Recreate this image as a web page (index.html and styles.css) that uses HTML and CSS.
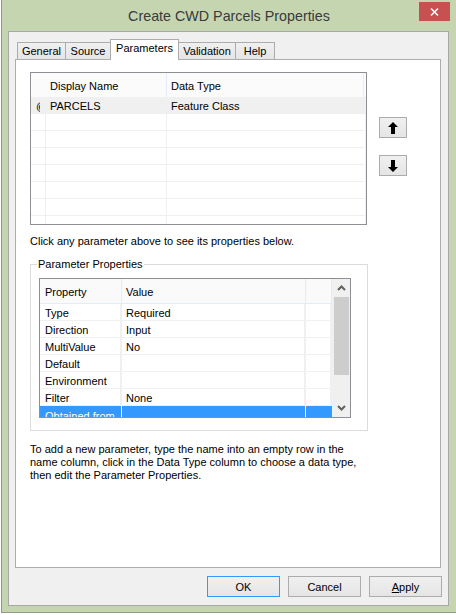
FILE: index.html
```html
<!DOCTYPE html>
<html>
<head>
<meta charset="utf-8">
<title>Create CWD Parcels Properties</title>
<link rel="stylesheet" href="styles.css">
</head>
<body>
<div class="window">
  <div class="titlebar">
    <div class="title">Create CWD Parcels Properties</div>
    <div class="close">
      <svg width="9" height="8" viewBox="0 0 9 8"><path d="M1 0.5 L8 7.5 M8 0.5 L1 7.5" stroke="#fff" stroke-width="1.5" fill="none"/></svg>
    </div>
  </div>
  <div class="client">
    <div class="tabs">
      <div class="tab w-general">General</div>
      <div class="tab w-source">Source</div>
      <div class="tab active w-params">Parameters</div>
      <div class="tab w-valid">Validation</div>
      <div class="tab w-help">Help</div>
    </div>
    <div class="panel">
      <div class="toprow">
        <div class="grid1">
          <div class="g1row g1head">
            <div class="c0"></div>
            <div class="c1">Display Name</div>
            <div class="c2">Data Type</div>
            <div class="c3"></div>
          </div>
          <div class="g1row sel">
            <div class="c0"><span class="clip">@</span></div>
            <div class="c1">PARCELS</div>
            <div class="c2">Feature Class</div>
          </div>
          <div class="g1row"><div class="c0"></div><div class="c1"></div><div class="c2"></div></div>
          <div class="g1row"><div class="c0"></div><div class="c1"></div><div class="c2"></div></div>
          <div class="g1row"><div class="c0"></div><div class="c1"></div><div class="c2"></div></div>
          <div class="g1row"><div class="c0"></div><div class="c1"></div><div class="c2"></div></div>
          <div class="g1row"><div class="c0"></div><div class="c1"></div><div class="c2"></div></div>
          <div class="g1row"><div class="c0"></div><div class="c1"></div><div class="c2"></div></div>
          <div class="g1row"><div class="c0"></div><div class="c1"></div><div class="c2"></div></div>
        </div>
        <div class="movebtns">
          <div class="mbtn"><svg width="10" height="12" viewBox="0 0 10 12"><polygon points="5,0 10,5 7,5 7,12 3,12 3,5 0,5" fill="#000"/></svg></div>
          <div class="mbtn"><svg width="10" height="12" viewBox="0 0 10 12"><polygon points="5,12 10,7 7,7 7,0 3,0 3,7 0,7" fill="#000"/></svg></div>
        </div>
      </div>
      <p class="hint">Click any parameter above to see its properties below.</p>
      <fieldset class="group">
        <legend>Parameter Properties</legend>
        <div class="grid2">
          <div class="g2main">
            <div class="g2row g2head">
              <div class="p">Property</div>
              <div class="v">Value</div>
              <div class="x"></div>
            </div>
            <div class="g2row"><div class="p">Type</div><div class="v">Required</div><div class="x"></div></div>
            <div class="g2row"><div class="p">Direction</div><div class="v">Input</div><div class="x"></div></div>
            <div class="g2row"><div class="p">MultiValue</div><div class="v">No</div><div class="x"></div></div>
            <div class="g2row"><div class="p">Default</div><div class="v"></div><div class="x"></div></div>
            <div class="g2row"><div class="p">Environment</div><div class="v"></div><div class="x"></div></div>
            <div class="g2row"><div class="p">Filter</div><div class="v">None</div><div class="x"></div></div>
            <div class="g2row selrow"><div class="p">Obtained from</div><div class="v"></div><div class="x"></div></div>
          </div>
          <div class="vscroll">
            <div class="sarrow"><svg width="9" height="6" viewBox="0 0 9 6"><path d="M1 5 L4.5 1.5 L8 5" stroke="#606060" stroke-width="2" fill="none"/></svg></div>
            <div class="thumb"></div>
            <div class="strack"></div>
            <div class="sarrow"><svg width="9" height="6" viewBox="0 0 9 6"><path d="M1 1 L4.5 4.5 L8 1" stroke="#606060" stroke-width="2" fill="none"/></svg></div>
          </div>
        </div>
      </fieldset>
      <p class="help">To add a new parameter, type the name into an empty row in the<br>name column, click in the Data Type column to choose a data type,<br>then edit the Parameter Properties.</p>
    </div>
    <div class="buttons">
      <button class="btn default">OK</button>
      <button class="btn">Cancel</button>
      <button class="btn"><u>A</u>pply</button>
    </div>
  </div>
</div>
</body>
</html>
```
FILE: styles.css
```css
* { box-sizing: border-box; }
html, body { margin: 0; padding: 0; background: #fff; }
body {
  font-family: "Liberation Sans", Arial, sans-serif;
  font-size: 11px;
  color: #000;
  width: 456px;
  height: 615px;
  overflow: hidden;
}

.window {
  margin-left: 1px;
  width: 455px;
  height: 613px;
  background: #c5d5b0;
  border-left: 1px solid #8f9c82;
  border-bottom: 1px solid #8f9c82;
  display: flex;
  flex-direction: column;
}

.titlebar {
  height: 31px;
  flex: none;
  display: grid;
  grid-template-columns: 1fr auto 1fr;
  align-items: start;
}
.title {
  grid-column: 2;
  font-size: 14.3px;
  line-height: 20px;
  padding-top: 6px;
  color: #3a3a3a;
  white-space: nowrap;
}
.close {
  grid-column: 3;
  justify-self: end;
  margin-top: 2px;
  margin-right: 6px;
  width: 31px;
  height: 19px;
  background: #c75050;
  display: flex;
  align-items: center;
  justify-content: center;
  padding-top: 1px;
}
.close svg { display: block; }

.client {
  margin: 0 7px 6px 6px;
  height: 575px;
  border: 1px solid #a7a7a7;
  background: #f0f0f0;
  display: flex;
  flex-direction: column;
  padding: 7px 7px 8px 6px;
}

.tabs {
  display: flex;
  align-items: flex-end;
  height: 20px;
  padding-left: 2px;
  flex: none;
}
.tab {
  height: 17px;
  border: 1px solid #acacac;
  border-bottom: none;
  background: linear-gradient(#f0f0f0, #e5e5e5);
  margin-left: -1px;
  text-align: center;
  padding-top: 2px;
  line-height: 13px;
  white-space: nowrap;
}
.tab:first-child { margin-left: 0; }
.tab.active {
  height: 21px;
  margin-bottom: -1px;
  background: #fff;
  position: relative;
  z-index: 1;
  padding-top: 2px;
}
.w-general { width: 49px; }
.w-source { width: 46px; }
.w-params { width: 69px; }
.w-valid { width: 58px; }
.w-help { width: 40px; }

.panel {
  flex: 1;
  border: 1px solid #adadad;
  background: #fff;
  padding: 12px 0 0 14px;
}

.toprow { display: flex; align-items: flex-start; }

.grid1 {
  width: 337px;
  height: 153px;
  border: 1px solid #8d8f94;
  overflow: hidden;
  background: #fff;
}
.g1row {
  display: grid;
  grid-template-columns: 15px 121px 1fr;
  height: 17px;
  line-height: 16px;
}
.g1row > div {
  border-right: 1px solid #f0f0f0;
  border-bottom: 1px solid #f0f0f0;
  white-space: nowrap;
  overflow: hidden;
}
.g1row .c1, .g1row .c2 { padding-left: 4px; }
.g1head {
  grid-template-columns: 15px 121px 197px 1fr;
  height: 24px;
  background: #fbfbfb;
}
.g1head > div { border-bottom: none; border-right: 1px solid #e6edf6; padding-top: 3px; line-height: 21px; }
.g1head .c0 { border-right: none; }
.g1head .c3 { border-right: none; }
.g1row.sel { background: #f0f0f0; }
.g1row.sel > div { border-color: #f0f0f0; padding-top: 2px; line-height: 15px; }
.clip {
  display: inline-block;
  width: 4px;
  overflow: hidden;
  margin-left: 5px;
  vertical-align: top;
}

.movebtns {
  display: flex;
  flex-direction: column;
  gap: 17px;
  margin-left: 12px;
  padding-top: 45px;
}
.mbtn {
  width: 28px;
  height: 21px;
  border: 1px solid #acacac;
  background: linear-gradient(#f0f0f0, #e5e5e5);
  display: flex;
  align-items: center;
  justify-content: center;
}
.mbtn svg { display: block; }

.hint {
  margin: 10px 0 0;
  line-height: 13px;
}

.group {
  width: 338px;
  margin: 10px 0 0;
  border: 1px solid #dcdcdc;
  padding: 7px 0 12px 8px;
  min-width: 0;
}
.group legend {
  padding: 0 1px;
  margin-left: -2px;
  line-height: 13px;
}

.grid2 {
  width: 312px;
  height: 140px;
  border: 1px solid #8d8f94;
  display: flex;
  overflow: hidden;
  background: #fff;
}
.g2main { width: 292px; flex: none; }
.g2row {
  display: grid;
  grid-template-columns: 82px 184px 1fr;
  height: 17px;
}
.g2row > div {
  border-right: 2px solid #f0f0f0;
  border-bottom: 1px solid #f0f0f0;
  white-space: nowrap;
  overflow: hidden;
  padding-top: 2px;
  line-height: 15px;
}
.g2row .p { padding-left: 5px; }
.g2row .v { padding-left: 4px; }
.g2head {
  height: 25px;
  background: #fafafa;
}
.g2head > div {
  border-right: 1px solid #e4ecf7;
  border-bottom: 1px solid #e4ecf7;
  padding-top: 2px;
  line-height: 22px;
}
.selrow > div {
  background: #3399ff;
  color: #fff;
  border-right: 1px solid #fff;
  border-bottom: none;
  padding-top: 3px;
  line-height: 15px;
}
.selrow .x { border-right: 1px dotted #c87a3a; border-top: 1px dotted #c87a3a; }

.vscroll {
  width: 18px;
  flex: none;
  background: #f0f0f0;
  display: flex;
  flex-direction: column;
  align-items: center;
}
.sarrow {
  height: 18px;
  width: 100%;
  display: flex;
  align-items: center;
  justify-content: center;
  flex: none;
}
.thumb {
  width: 15px;
  height: 78px;
  background: #cdcdcd;
  flex: none;
}
.strack { flex: 1; }

.help {
  margin: 12px 0 0;
  line-height: 13px;
  white-space: nowrap;
}

.buttons {
  display: flex;
  justify-content: flex-end;
  gap: 8px;
  margin: 8px -1px 0 0;
  flex: none;
}
.btn {
  width: 73px;
  height: 21px;
  border: 1px solid #acacac;
  background: linear-gradient(#f0f0f0, #e5e5e5);
  font: inherit;
  color: #000;
  padding: 1px 0 0;
  line-height: 18px;
}
.btn.default { border-color: #3399ff; }
.btn u { text-decoration: underline; }
```
